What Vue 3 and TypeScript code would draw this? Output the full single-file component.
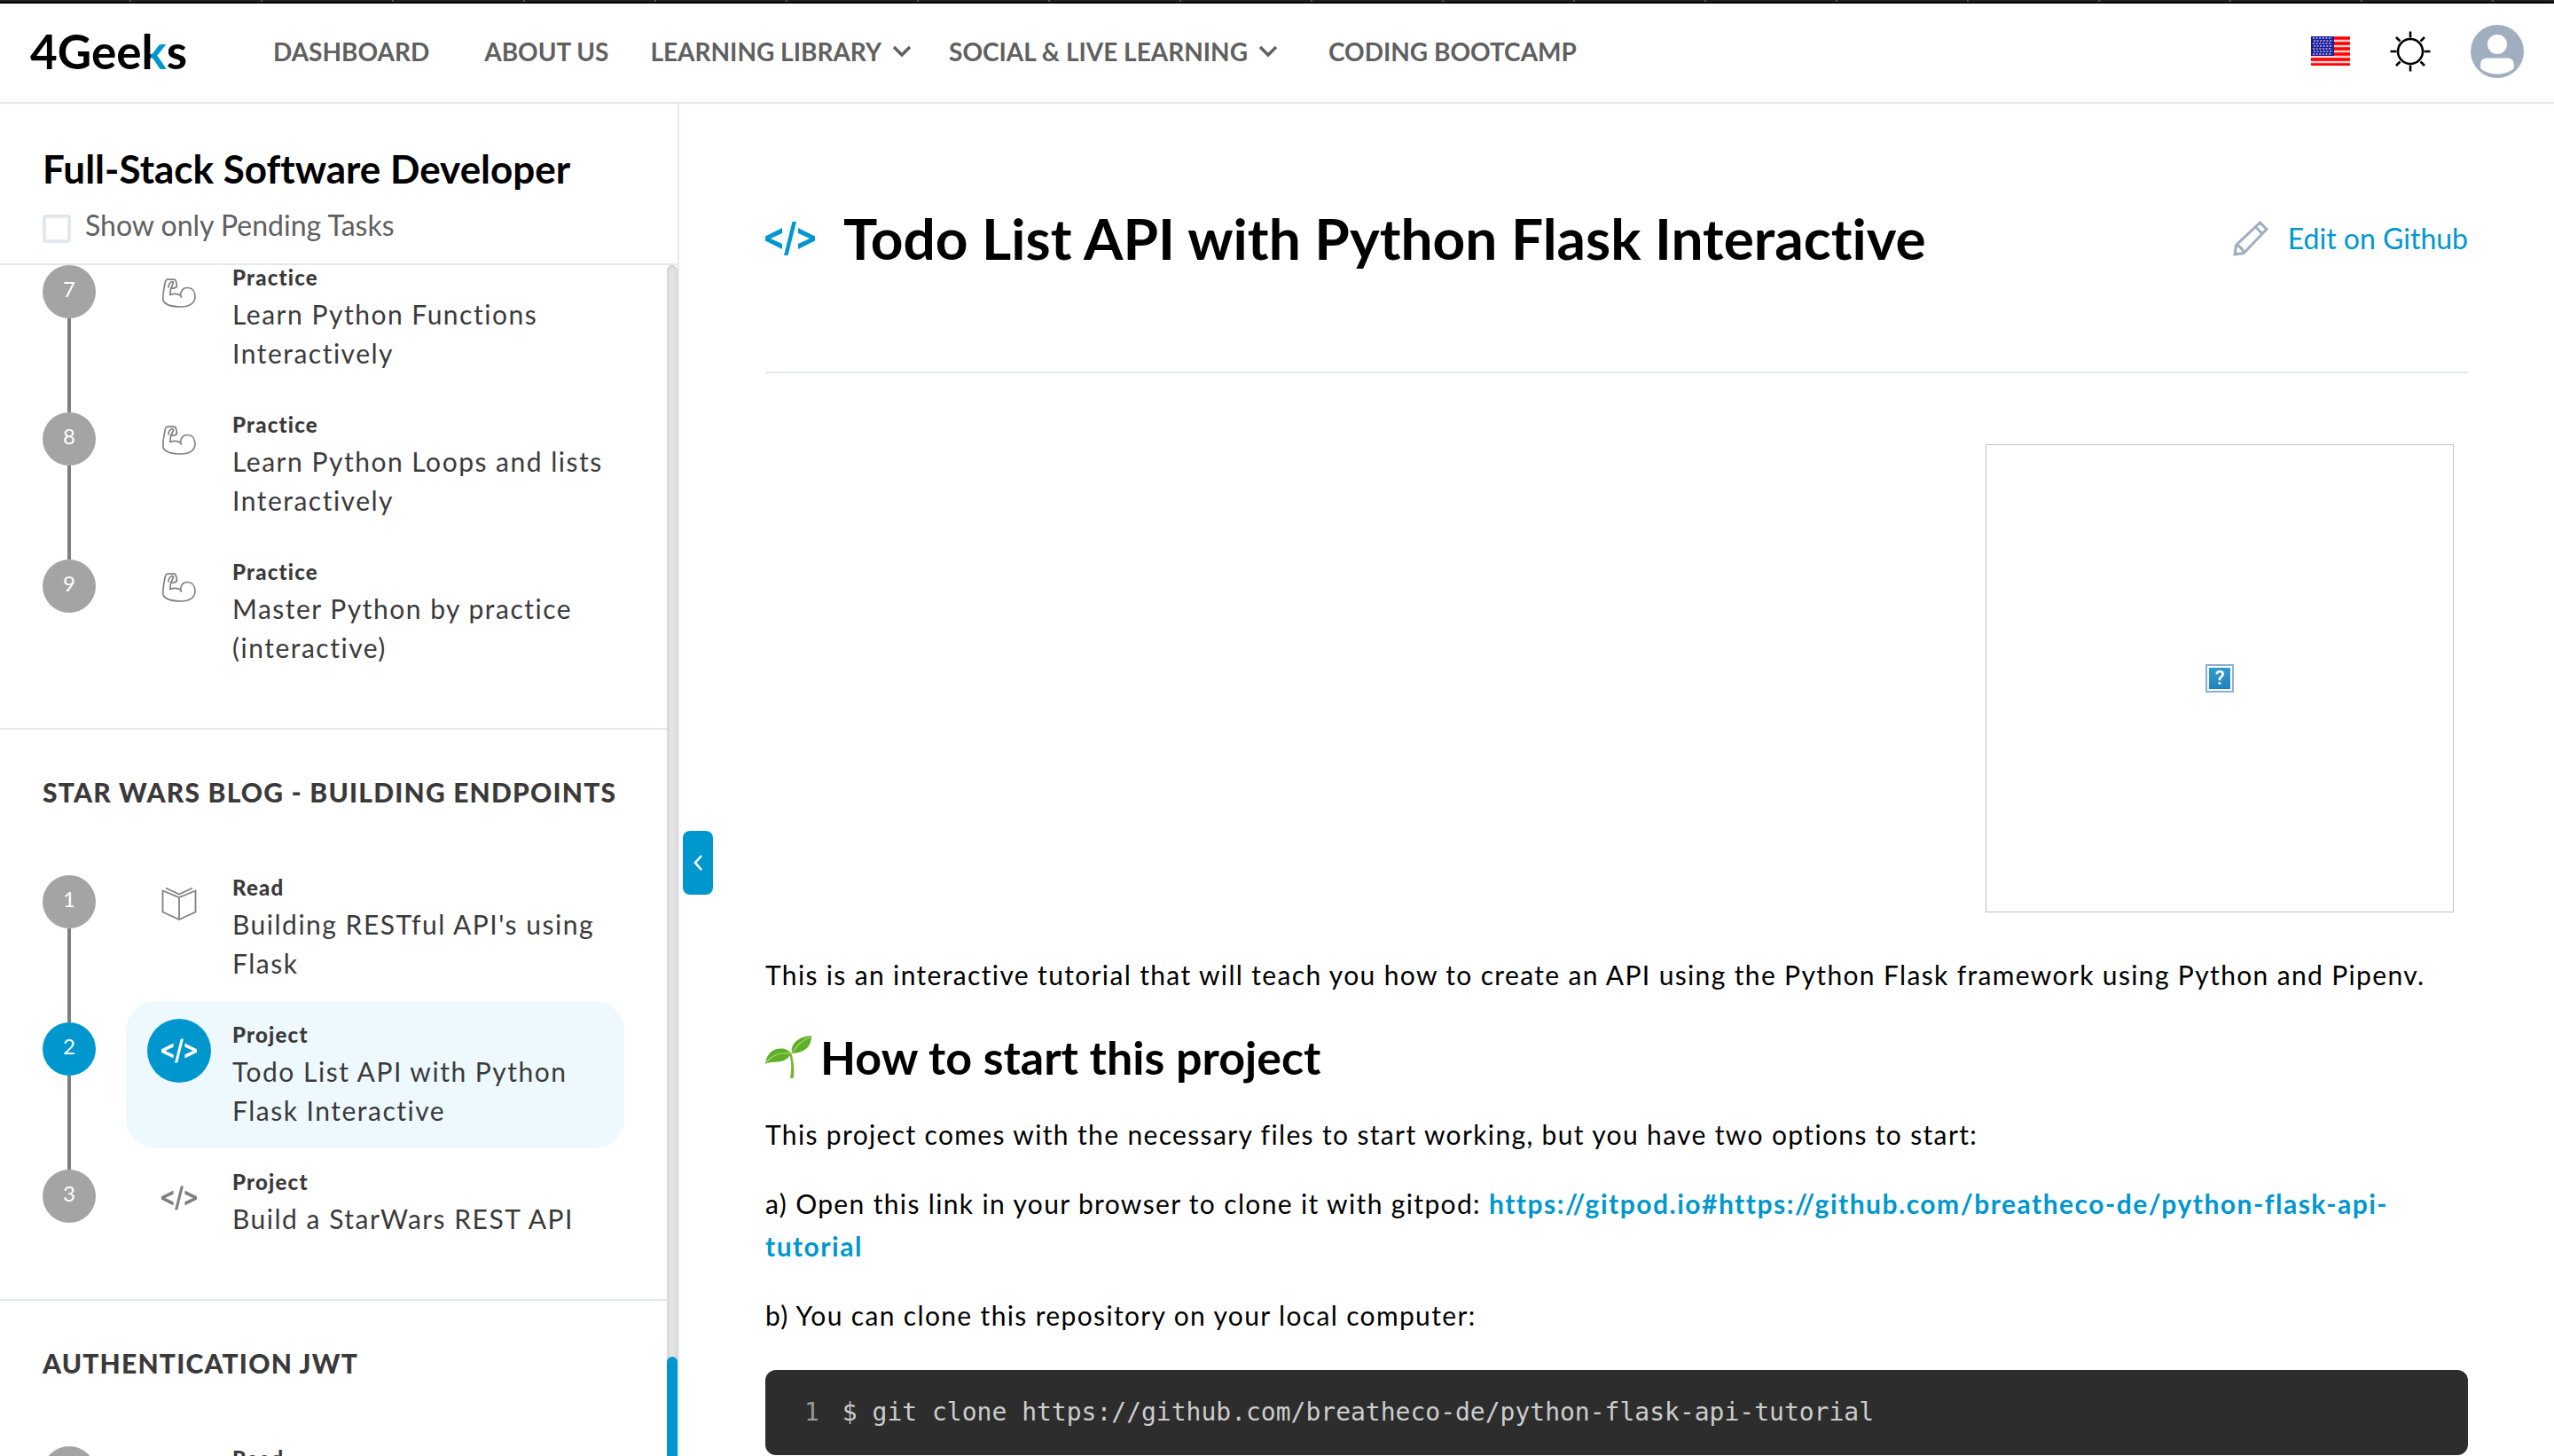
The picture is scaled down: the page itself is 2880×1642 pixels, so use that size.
<script setup lang="ts">
type Kind = 'arm' | 'book' | 'code'

interface Task {
  step: number
  kind: Kind
  label: string
  title?: string
  active?: boolean
}

interface Module {
  name: string
  tasks: Task[]
}

interface NavItem {
  text: string
  menu?: boolean
}

const nav: NavItem[] = [
  { text: 'DASHBOARD' },
  { text: 'ABOUT US' },
  { text: 'LEARNING LIBRARY', menu: true },
  { text: 'SOCIAL & LIVE LEARNING', menu: true },
  { text: 'CODING BOOTCAMP' },
]

const modules: Module[] = [
  {
    name: '',
    tasks: [
      { step: 7, kind: 'arm', label: 'Practice', title: 'Learn Python Functions Interactively' },
      { step: 8, kind: 'arm', label: 'Practice', title: 'Learn Python Loops and lists Interactively' },
      { step: 9, kind: 'arm', label: 'Practice', title: 'Master Python by practice (interactive)' },
    ],
  },
  {
    name: 'STAR WARS BLOG - BUILDING ENDPOINTS',
    tasks: [
      { step: 1, kind: 'book', label: 'Read', title: "Building RESTful API's using Flask" },
      { step: 2, kind: 'code', label: 'Project', title: 'Todo List API with Python Flask Interactive', active: true },
      { step: 3, kind: 'code', label: 'Project', title: 'Build a StarWars REST API' },
    ],
  },
  {
    name: 'AUTHENTICATION JWT',
    tasks: [{ step: 1, kind: 'book', label: 'Read' }],
  },
]
</script>

<template>
  <div class="page">
    <div class="strip"></div>

    <header class="topbar">
      <a class="logo" href="#">4Gee<span class="logo-k">k</span>s</a>
      <nav class="nav">
        <template v-for="item in nav" :key="item.text">
          <button v-if="item.menu" type="button" class="nav-menu">
            {{ item.text }}
            <svg width="22" height="14" viewBox="0 0 22 14" aria-hidden="true">
              <path d="M2 2l9 9 9-9" fill="none" stroke="currentColor" stroke-width="3.4" />
            </svg>
          </button>
          <a v-else href="#" class="nav-link">{{ item.text }}</a>
        </template>
      </nav>
      <div class="tools">
        <button type="button" class="icon-button" aria-label="Language">
          <svg width="44" height="33" viewBox="0 0 44 33" aria-hidden="true">
            <rect width="44" height="33" fill="#ffd0d0" />
            <path
              d="M0 2h44M0 8h44M0 14h44M0 20h44M0 26h44M0 32h44"
              stroke="#ff0000"
              stroke-width="3.6"
            />
            <rect width="26" height="22" fill="#1a1a99" />
            <path
              v-for="row in 7"
              :key="row"
              :d="`M${row % 2 ? 2 : 3} ${row * 3 - 1}h22`"
              stroke="#9a9ad8"
              stroke-width="1.8"
              stroke-dasharray="2 1.6"
            />
          </svg>
        </button>
        <button type="button" class="icon-button" aria-label="Toggle theme">
          <svg width="46" height="46" viewBox="0 0 46 46" aria-hidden="true">
            <g fill="none" stroke="#000" stroke-width="2.6">
              <circle cx="23" cy="23" r="14" />
              <path
                d="M23 .5v7M23 38.500v7M.5 23h7M38.500 23h7M7 7l4.500 4.500M34.500 34.500l4.500 4.500M39 7l-4.500 4.500M11.500 34.500L7 39"
              />
            </g>
          </svg>
        </button>
        <button type="button" class="icon-button" aria-label="Account">
          <svg width="60" height="60" viewBox="0 0 60 60" aria-hidden="true">
            <circle cx="30" cy="30" r="30" fill="#a0aec0" />
            <circle cx="30" cy="22" r="11" fill="#fff" />
            <path d="M18 37.500h24c4 0 6.800 3 6.800 7v4.500c-4 4-11 6.500-18.800 6.500s-14.800-2.500-18.800-6.500v-4.500c0-4 2.800-7 6.800-7z" fill="#fff" />
          </svg>
        </button>
      </div>
    </header>

    <div class="body">
      <aside class="sidebar">
        <div class="course">
          <h2 class="course-title">Full-Stack Software Developer</h2>
          <label class="pending">
            <input type="checkbox" class="check" />
            <span>Show only Pending Tasks</span>
          </label>
        </div>

        <div class="scroller">
          <div class="modules">
            <section v-for="(mod, index) in modules" :key="index" class="module" :class="{ scrolled: !mod.name }">
              <h3 v-if="mod.name" class="module-title">{{ mod.name }}</h3>
              <ol class="tasks">
                <li v-for="task in mod.tasks" :key="task.step" class="task">
                  <div class="rail">
                    <span class="step" :class="{ active: task.active }">{{ task.step }}</span>
                  </div>
                  <a href="#" class="card" :class="{ active: task.active }">
                    <span class="kind">
                      <svg v-if="task.kind === 'arm'" width="40" height="34" viewBox="0 0 40 34" aria-hidden="true">
                        <path
                          d="M2 25C1 18 3.500 9 4.500 3.500C5 1.800 5.600 1.200 7 1.200H14C15.500 1.200 16.200 1.800 16.500 3.500L17.500 7.500C17.700 9.500 16.500 10.500 14.500 10.800L10.500 11.500L9.800 18.500C14 16.800 18 17 21.500 19C22 14 24.500 10.500 29 10.500C35 10.500 38 15 38 20.500C38 27.500 32 32 22 32C13 32 4.500 30 2 25ZM21.500 19L22.500 21M8 10C7.500 8 9.500 4.500 11.500 3.800C13.500 3.400 14 4.800 13 6.500L10.500 11.500"
                          fill="none"
                          stroke="currentColor"
                          stroke-width="1.700"
                          stroke-linejoin="round"
                          stroke-linecap="round"
                        />
                      </svg>
                      <svg v-else-if="task.kind === 'book'" width="40" height="38" viewBox="0 0 40 38" aria-hidden="true">
                        <path
                          d="M1.500 4.500L20 12l18.500-7.500v24L20 37 1.500 28.500zM20 12v25M5 1.500L20 8.500l15-7"
                          fill="none"
                          stroke="currentColor"
                          stroke-width="1.800"
                        />
                      </svg>
                      <svg v-else width="40" height="28" viewBox="0 0 56 38" aria-hidden="true">
                        <path
                          d="M0 16.500L19 7v6L6 19l13 6v6L0 21.500zM56 16.500L37 7v6l13 6-13 6v6l19-9.500zM30.500 0H35L25.500 38H21z"
                          fill="currentColor"
                        />
                      </svg>
                    </span>
                    <span class="words">
                      <strong class="label">{{ task.label }}</strong>
                      <span v-if="task.title" class="title">{{ task.title }}</span>
                    </span>
                  </a>
                </li>
              </ol>
            </section>
          </div>
          <div class="track"><div class="thumb"></div></div>
        </div>
      </aside>

      <main class="main">
        <button type="button" class="collapse" aria-label="Collapse sidebar">
          <svg width="12" height="20" viewBox="0 0 12 20" aria-hidden="true">
            <path d="M10 2L3 10l7 8" fill="none" stroke="#fff" stroke-width="2.600" />
          </svg>
        </button>
        <article class="article">
          <div class="heading">
            <svg class="heading-icon" width="56" height="38" viewBox="0 0 56 38" aria-hidden="true">
              <path
                d="M0 16.500L19 7v6L6 19l13 6v6L0 21.500zM56 16.500L37 7v6l13 6-13 6v6l19-9.500zM30.500 0H35L25.500 38H21z"
                fill="#0097cf"
              />
            </svg>
            <h1 class="heading-text">Todo List API with Python Flask Interactive</h1>
            <a href="#" class="edit">
              <svg width="40" height="40" viewBox="0 0 40 40" aria-hidden="true">
                <path
                  d="M2 38l1.500-10.500L30.500 2 38 9.500 12 36.500zM3.500 27.500c4 1 7.500 4.500 8.500 9M25.500 7l7.500 7.500"
                  fill="none"
                  stroke="#a0aec0"
                  stroke-width="3"
                />
                <path d="M1 39l1-6 5 5z" fill="#a0aec0" />
              </svg>
              <span>Edit on Github</span>
            </a>
          </div>

          <div class="picture" role="img" aria-label="Missing image">
            <span class="missing">?</span>
          </div>

          <p>This is an interactive tutorial that will teach you how to create an API using the Python Flask framework using Python and Pipenv.</p>

          <h2 class="subtitle">
            <svg width="52" height="48" viewBox="0 0 52 48" aria-hidden="true">
              <path d="M29.500 20c2.500 9 3.500 18 2.500 27.500-1.300.8-3 .8-4 0C30 38 29.500 29 27 20z" fill="#7cb52c" />
              <path d="M30 20c-2-9 5-19 22-20 0 10-5 19-22 20z" fill="#5fae27" />
              <path d="M30 20C34 12 41 6 51 1" fill="none" stroke="#9ad357" stroke-width="1.500" />
              <path d="M29 20C23 11 2 12 0 32c8-5 22 2 29-12z" fill="#5fae27" />
              <path d="M28 20C19 19 8 21 1 30" fill="none" stroke="#9ad357" stroke-width="1.500" />
            </svg>
            How to start this project
          </h2>

          <p>This project comes with the necessary files to start working, but you have two options to start:</p>
          <p>
            a) Open this link in your browser to clone it with gitpod:
            <a href="#" class="link">https://gitpod.io#https://github.com/breatheco-de/python-flask-api-tutorial</a>
          </p>
          <p>b) You can clone this repository on your local computer:</p>

          <pre class="code"><span class="line-number">1</span><code>$ git clone https://github.com/breatheco-de/python-flask-api-tutorial</code></pre>
        </article>
      </main>
    </div>
  </div>
</template>

<style>
body {
  margin: 0;
  background: #fff;
}
</style>

<style scoped>
* {
  box-sizing: border-box;
}

.page {
  display: flex;
  flex-direction: column;
  height: 100vh;
  overflow: hidden;
  font-family: Lato, "Liberation Sans", sans-serif;
  font-variant-ligatures: none;
  color: #000;
}

a {
  color: inherit;
  text-decoration: none;
}

button {
  border: 0;
  padding: 0;
  background: none;
  font: inherit;
  color: inherit;
}

svg {
  display: block;
  flex: none;
}

.strip {
  flex: none;
  height: 4px;
  background: repeating-linear-gradient(90deg, #231f20 0 146px, #5a5657 146px 148px);
  border-bottom: 2px solid #000;
}

.topbar {
  flex: none;
  display: flex;
  align-items: center;
  height: 113px;
  padding: 0 34px 4px;
  border-bottom: 2px solid #e2e8f0;
}

.logo {
  width: 243px;
  font-size: 53px;
  line-height: 64px;
  font-weight: 700;
}

.logo-k {
  background: linear-gradient(90deg, #000 34%, #0097cf 34%);
  background-clip: text;
  color: transparent;
}

.nav {
  display: flex;
  align-items: center;
  flex: 1;
  font-size: 28px;
  line-height: 40px;
  font-weight: 700;
  color: #606060;
  white-space: nowrap;
}

.nav-link {
  padding: 0 31px;
}

.nav-menu {
  display: flex;
  align-items: center;
  gap: 12px;
  padding: 0 26px 0 16px;
}

.tools {
  display: flex;
  align-items: center;
  gap: 45px;
}

.body {
  flex: 1;
  display: flex;
  min-height: 0;
}

.sidebar {
  flex: none;
  display: flex;
  flex-direction: column;
  width: 766px;
  border-right: 2px solid #e2e8f0;
}

.course {
  padding: 45px 48px 19px;
  border-bottom: 2px solid #e2e8f0;
}

.course-title {
  margin: 0 0 12px;
  font-size: 44px;
  line-height: 56px;
  font-weight: 700;
}

.pending {
  display: flex;
  gap: 16px;
  font-size: 32px;
  line-height: 48px;
  color: #606060;
}

.check {
  appearance: none;
  flex: none;
  width: 32px;
  height: 32px;
  margin: 12px 0 0;
  border: 4px solid #e2e8f0;
  border-radius: 4px;
}

.scroller {
  flex: 1;
  display: flex;
  min-height: 0;
  overflow: hidden;
}

.modules {
  flex: 1;
  min-width: 0;
}

.module {
  padding: 48px;
  border-bottom: 2px solid #e2e8f0;
}

.module.scrolled {
  margin-top: -24px;
  padding-top: 0;
}

.module-title {
  margin: 0 0 48px;
  font-size: 30px;
  line-height: 44px;
  font-weight: 900;
  letter-spacing: 0.04em;
  color: #3a3a3a;
  white-space: nowrap;
}

.tasks {
  margin: 0;
  padding: 0;
  list-style: none;
}

.task {
  display: flex;
  gap: 34px;
}

.rail {
  flex: none;
  display: flex;
  flex-direction: column;
  align-items: center;
  width: 60px;
}

.rail::before {
  content: "";
  width: 4px;
  height: 24px;
  background: #808080;
}

.rail::after {
  content: "";
  flex: 1;
  width: 4px;
  background: #808080;
}

.module:not(.scrolled) .task:first-child .rail::before,
.task:last-child .rail::after {
  background: none;
}

.step {
  width: 60px;
  height: 60px;
  border-radius: 50%;
  background: #a4a4a4;
  color: #fff;
  font-size: 24px;
  line-height: 54px;
  text-align: center;
}

.step.active {
  background: #0097cf;
}

.card {
  display: flex;
  gap: 24px;
  width: 562px;
  padding: 20px 24px 21px;
  border-radius: 34px;
  color: #3a3a3a;
}

.card.active {
  background: #edf9fe;
}

.kind {
  flex: none;
  display: flex;
  align-items: center;
  justify-content: center;
  width: 72px;
  height: 72px;
  border-radius: 50%;
  color: #808080;
}

.card.active .kind {
  background: #0097cf;
  color: #fff;
}

.words {
  display: flex;
  flex-direction: column;
  gap: 1px;
}

.label {
  font-size: 24px;
  line-height: 36px;
  font-weight: 900;
  letter-spacing: 0.05em;
}

.title {
  font-size: 30px;
  line-height: 44px;
  letter-spacing: 0.05em;
}

.track {
  flex: none;
  display: flex;
  flex-direction: column;
  justify-content: flex-end;
  width: 12px;
  border-radius: 6px 6px 0 0;
  background: #e4e4e4;
  box-shadow: inset 0 0 5px #c4c4c4;
}

.thumb {
  height: 112px;
  border-radius: 6px 6px 0 0;
  background: #0097cf;
}

.main {
  position: relative;
  flex: 1;
  min-width: 0;
  padding: 0 48px;
}

.collapse {
  position: absolute;
  left: 4px;
  top: 820px;
  display: flex;
  align-items: center;
  justify-content: center;
  width: 34px;
  height: 72px;
  border-radius: 8px;
  background: #0097cf;
}

.article {
  max-width: 1920px;
  margin: 0 auto;
}

.heading {
  display: flex;
  align-items: center;
  padding: 112px 0 110px;
  border-bottom: 2px solid #e2e8f0;
}

.heading-text {
  flex: 1;
  margin: 0 0 0 32px;
  font-size: 64px;
  line-height: 80px;
  font-weight: 700;
}

.edit {
  display: flex;
  align-items: center;
  gap: 22px;
  font-size: 32px;
  line-height: 40px;
  color: #0097cf;
}

.picture {
  display: flex;
  align-items: center;
  justify-content: center;
  width: 528px;
  height: 528px;
  margin: 80px 16px 46px auto;
  border: 1px solid #c0c0c0;
}

.missing {
  width: 32px;
  height: 32px;
  border: 2px solid #8fadd4;
  outline: 2px solid #fff;
  outline-offset: -4px;
  background: linear-gradient(#319fd3, #2080bb);
  color: #fff;
  font-family: Roboto, sans-serif;
  font-size: 22px;
  line-height: 28px;
  font-weight: 500;
  text-align: center;
}

p {
  margin: 0 0 30px;
  font-size: 30px;
  line-height: 48px;
  letter-spacing: 0.045em;
}

.subtitle {
  display: flex;
  align-items: center;
  gap: 10px;
  margin: 38px 0 32px;
  font-size: 52px;
  line-height: 62px;
  font-weight: 700;
}

.link {
  font-weight: 700;
  letter-spacing: 0.05em;
  color: #0097cf;
}

.code {
  display: flex;
  gap: 26px;
  margin: 38px 0 0;
  padding: 24px 44px;
  border-radius: 12px;
  background: #2d2d2d;
  color: #ccc;
  font-family: "DejaVu Sans Mono", monospace;
  font-size: 28px;
  line-height: 48px;
}

.code code {
  font: inherit;
}

.line-number {
  color: #999;
}
</style>
